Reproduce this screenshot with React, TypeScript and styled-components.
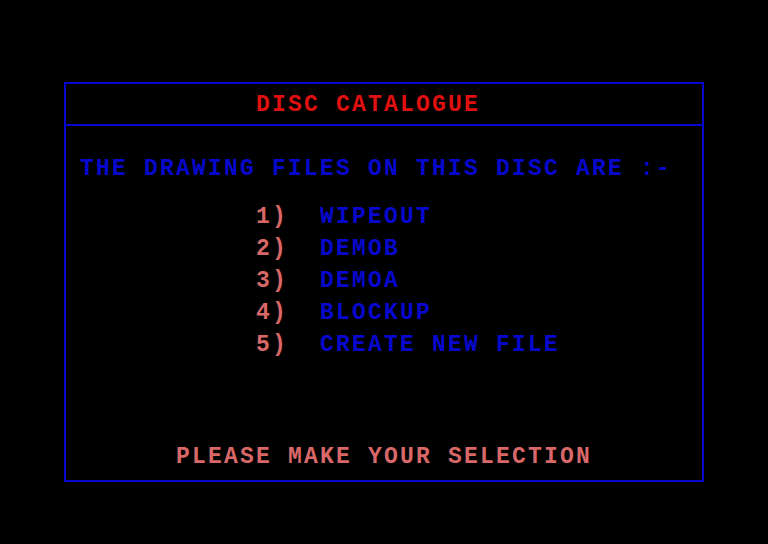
import styled, { createGlobalStyle } from "styled-components";
import { Fragment } from "react";

const BLUE = "#0808cc";
const RED = "#e01010";
const PINK = "#d86868";

const GlobalStyle = createGlobalStyle`
  html, body {
    margin: 0;
    padding: 0;
    background: #000;
  }
  body {
    width: 768px;
    height: 544px;
    overflow: hidden;
  }
`;

// 16px character grid, like the 8x8 font doubled
const Screen = styled.div`
  width: 768px;
  height: 544px;
  background: #000;
  padding: 82px 64px 0;
  box-sizing: border-box;
  font-family: "Liberation Mono", "Courier New", monospace;
  font-weight: bold;
  font-size: 23px;
  letter-spacing: 2.2px;
  line-height: 16px;
  white-space: pre;
`;

const Panel = styled.div`
  width: 640px;
  height: 400px;
  box-sizing: border-box;
  border: 2px solid ${BLUE};
  display: flex;
  flex-direction: column;
`;

const Header = styled.div`
  height: 42px;
  box-sizing: border-box;
  border-bottom: 2px solid ${BLUE};
  padding: 13px 0 0 190px;
`;

const Line = styled.div<{ $color: string; $indent?: number }>`
  height: 16px;
  color: ${(p) => p.$color};
  padding-left: ${(p) => p.$indent ?? 0}px;
`;

const Body = styled.div`
  flex: 1;
  display: flex;
  flex-direction: column;
  padding: 35px 0 15px;
`;

const ItemList = styled.div`
  margin-top: 32px;
  padding-left: 190px;
  display: grid;
  grid-template-columns: 64px auto;
  row-gap: 16px;
  justify-content: start;
`;

const Spacer = styled.div`
  flex: 1;
`;

const files = ["WIPEOUT", "DEMOB", "DEMOA", "BLOCKUP", "CREATE NEW FILE"];

export default function App() {
  return (
    <Screen>
      <GlobalStyle />
      <Panel>
        <Header>
          <Line $color={RED}>DISC CATALOGUE</Line>
        </Header>
        <Body>
          <Line $color={BLUE} $indent={14}>
            THE DRAWING FILES ON THIS DISC ARE :-
          </Line>
          <ItemList>
            {files.map((f, i) => (
              <Fragment key={f}>
                <Line $color={PINK}>{`${i + 1})`}</Line>
                <Line $color={BLUE}>{f}</Line>
              </Fragment>
            ))}
          </ItemList>
          <Spacer />
          <Line $color={PINK} $indent={110}>
            PLEASE MAKE YOUR SELECTION
          </Line>
        </Body>
      </Panel>
    </Screen>
  );
}
